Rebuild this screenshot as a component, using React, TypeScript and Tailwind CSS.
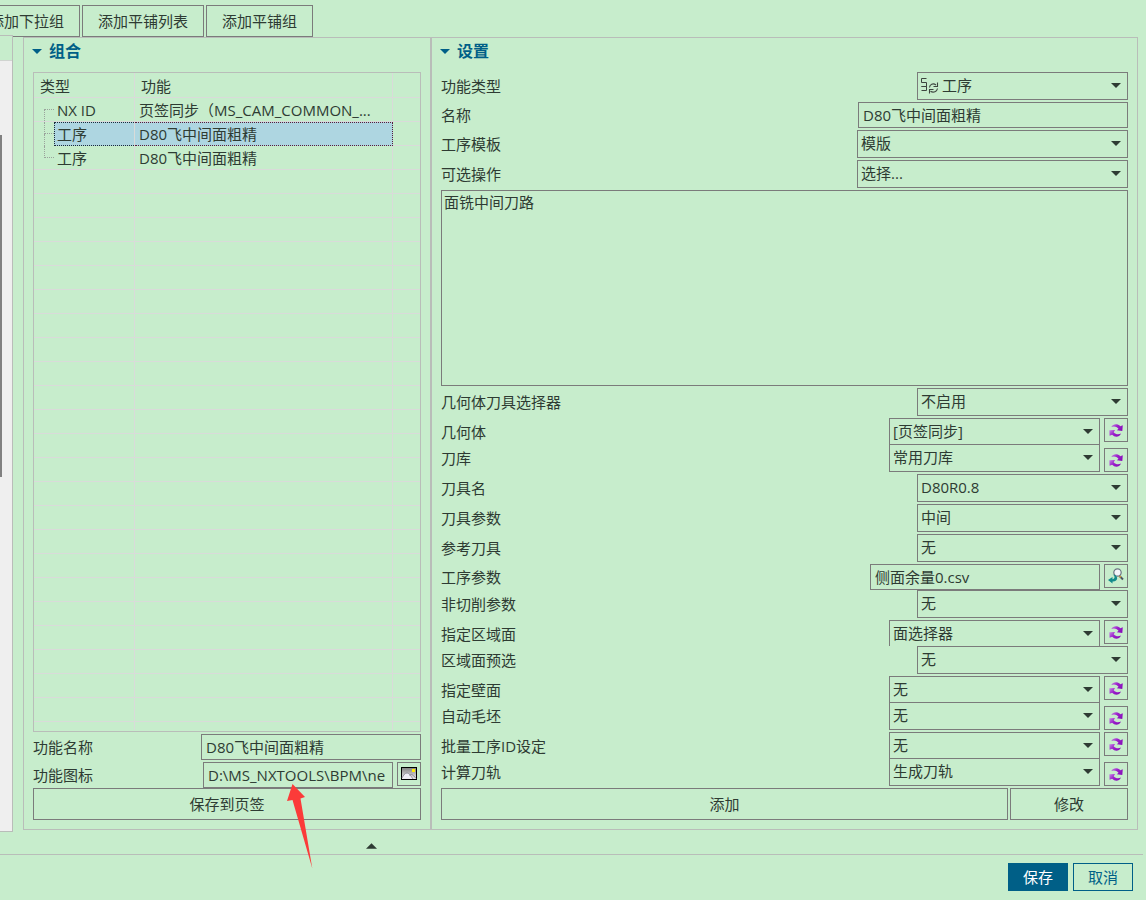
import React from "react";

const ctl = "border border-[#7b7b7b] bg-[#c7edcc] text-[#2e3b33]";

function Caret({ className = "" }: { className?: string }) {
  return (
    <svg viewBox="0 0 10 5" className={`h-[5px] w-[10px] shrink-0 ${className}`} fill="currentColor" aria-hidden="true">
      <path d="M0 0h10L5 5z" />
    </svg>
  );
}

function ProcessIcon() {
  return (
    <svg viewBox="0 0 18 18" className="pointer-events-none absolute top-[5px] left-[4px] h-[18px] w-[18px]" fill="none" stroke="#3d453f" aria-hidden="true">
      <path d="M5.500 1.500H.5V5.500H5.500V9.500H.5M.5 9.500H5.500V13.500H.5" />
      <path d="M8.500 10.500C8.700 7.500 12 5.700 15 8M16.500 5.500V9.500H12.500M16.500 11.500C16 14.500 12.500 16.300 9.500 14.300M8.500 16.500V12.500H12.500" strokeWidth="1.100" />
    </svg>
  );
}

function RefreshIcon() {
  return (
    <svg viewBox="0 0 14 13" className="h-[13px] w-[14px]" aria-hidden="true">
      <defs>
        <linearGradient id="violet" x1="0" y1="0" x2="1" y2="0.6">
          <stop offset="0" stopColor="#c78ae4" />
          <stop offset="0.5" stopColor="#9c22cc" />
          <stop offset="1" stopColor="#8a0fba" />
        </linearGradient>
      </defs>
      <path d="M2.300 3C4-.3 8.500-.8 11.300 2.200L13.800 1.300L13.300 7L7.800 6.300L9.500 4.700C7.500 2.300 4.800 2 2.300 3Z" fill="url(#violet)" />
      <path d="M12 9.500C10.300 13.300 5.800 13.600 3.200 10.800L.6 11.700L.3 6.300L6 6.100L4.700 8.200C6.800 10.500 9.500 10.700 12 9.500Z" fill="url(#violet)" />
    </svg>
  );
}

function BrowseIcon() {
  return (
    <svg viewBox="0 0 16 16" className="h-[16px] w-[16px]" aria-hidden="true">
      <path d="M11.500 8L15 11.500" stroke="#4a5563" strokeWidth="2" />
      <path d="M11 7.500L12.800 9.300" stroke="#e0a030" strokeWidth="1.500" />
      <circle cx="9.500" cy="4.500" r="3.700" fill="#f4f6fb" stroke="#6b7480" strokeWidth="1.200" />
      <path d="M4.500 6.500C7.500 8 7 11 4.500 11.200V9L0 12L4.500 15.500V13.500C10.500 13.800 11 7 4.500 6.500Z" fill="#128c8c" />
    </svg>
  );
}

function PictureIcon() {
  return (
    <svg viewBox="0 0 16 13" className="-mt-[2px] h-[13px] w-[16px]" aria-hidden="true">
      <defs>
        <linearGradient id="sky" x1="0" y1="0" x2="0" y2="1">
          <stop offset="0" stopColor="#808080" />
          <stop offset="1" stopColor="#f2f2f2" />
        </linearGradient>
      </defs>
      <rect x=".5" y=".5" width="15" height="12" fill="url(#sky)" stroke="#000" />
      <rect x="11" y="2" width="3" height="3" fill="#ffee00" />
      <path d="M1 11C2.500 8 4 6 6 6C8 6 10 9 12 12" fill="#eeeef5" stroke="#8a8a94" strokeWidth=".9" />
      <path d="M8.500 8.500C10 6.500 11.500 7 15 11.500" fill="none" stroke="#8a8a94" strokeWidth=".9" />
    </svg>
  );
}

function IconButton({ label, end = false, children }: { label: string; end?: boolean; children: React.ReactNode }) {
  return (
    <button type="button" aria-label={label} className={`ml-1 flex h-6 w-6 shrink-0 items-center justify-center ${end ? "self-end" : "self-start"} ${ctl}`}>
      {children}
    </button>
  );
}

type Field = {
  label: string;
  value: string;
  kind?: "select" | "input";
  width: string;
  tight?: boolean;
  action?: "refresh" | "browse";
  icon?: boolean;
};

const TOP: Field[] = [
  { label: "功能类型", value: "工序", width: "w-[211px]", icon: true },
  { label: "名称", value: "D80飞中间面粗精", width: "w-[270px]", kind: "input" },
  { label: "工序模板", value: "模版", width: "w-[271px]" },
  { label: "可选操作", value: "选择...", width: "w-[271px]" },
];

const BOTTOM: Field[] = [
  { label: "几何体刀具选择器", value: "不启用", width: "w-[211px]" },
  { label: "几何体", value: "[页签同步]", width: "w-[211px]", action: "refresh", tight: true },
  { label: "刀库", value: "常用刀库", width: "w-[211px]", action: "refresh" },
  { label: "刀具名", value: "D80R0.8", width: "w-[211px]" },
  { label: "刀具参数", value: "中间", width: "w-[211px]" },
  { label: "参考刀具", value: "无", width: "w-[211px]" },
  { label: "工序参数", value: "侧面余量0.csv", width: "w-[230px]", kind: "input", action: "browse", tight: true },
  { label: "非切削参数", value: "无", width: "w-[211px]" },
  { label: "指定区域面", value: "面选择器", width: "w-[211px]", action: "refresh", tight: true },
  { label: "区域面预选", value: "无", width: "w-[211px]" },
  { label: "指定壁面", value: "无", width: "w-[211px]", action: "refresh", tight: true },
  { label: "自动毛坯", value: "无", width: "w-[211px]", action: "refresh" },
  { label: "批量工序ID设定", value: "无", width: "w-[211px]", action: "refresh", tight: true },
  { label: "计算刀轨", value: "生成刀轨", width: "w-[211px]", action: "refresh" },
];

function FieldRow({ f }: { f: Field }) {
  const id = `field-${f.label}`;
  const input = f.kind === "input";
  return (
    <div className={f.tight ? "h-[26px] overflow-hidden" : "mb-[2px]"}>
      <div className={`flex items-center ${input ? "h-[26px]" : "h-[28px]"}`}>
        <label htmlFor={id} className="flex-1 whitespace-nowrap">{f.label}</label>
        {input ? (
          <input id={id} defaultValue={f.value} className={`h-[26px] px-1 pb-[2px] ${f.width} ${ctl}`} />
        ) : (
          <div className={`relative h-[28px] ${f.width}`}>
            <select id={id} defaultValue={f.value} className={`h-full w-full appearance-none pr-6 pb-[2px] ${f.icon ? "pl-6" : "pl-[3px]"} ${ctl}`}>
              <option>{f.value}</option>
            </select>
            {f.icon && <ProcessIcon />}
            <Caret className="pointer-events-none absolute top-[11px] right-[7px]" />
          </div>
        )}
        {f.action && (
          <IconButton label={f.action === "refresh" ? `刷新${f.label}` : `浏览${f.label}`} end={!f.tight}>
            {f.action === "refresh" ? <RefreshIcon /> : <BrowseIcon />}
          </IconButton>
        )}
      </div>
    </div>
  );
}

function PanelTitle({ children }: { children: React.ReactNode }) {
  return (
    <h2 className="flex h-[34px] items-start gap-[7px] pt-px text-[16px] leading-6 font-bold text-[#005f87]">
      <Caret className="mt-[10px] -ml-px" />
      {children}
    </h2>
  );
}

const ITEMS = [
  { type: "NX ID", name: "页签同步（MS_CAM_COMMON_...", selected: false },
  { type: "工序", name: "D80飞中间面粗精", selected: true },
  { type: "工序", name: "D80飞中间面粗精", selected: false },
];

function ItemTable() {
  const line = "border-[#d9dbd9]";
  return (
    <div className="flex-1 border border-[#b9bdb9]">
      <table className="w-full table-fixed border-separate border-spacing-0">
        <colgroup>
          <col className="w-[101px]" />
          <col />
          <col className="w-[27px]" />
        </colgroup>
        <thead>
          <tr className="h-[25px] text-left">
            <th className={`border-r border-b p-0 pt-px pl-[6px] font-normal ${line}`}>类型</th>
            <th className={`border-r border-b p-0 pt-px pl-[6px] font-normal ${line}`}>功能</th>
            <th className={`border-b p-0 ${line}`} />
          </tr>
        </thead>
        <tbody>
          {ITEMS.map((item, i) => (
            <tr key={i} className="h-[24px]">
              <td className={`border-r p-0 ${item.selected ? "" : "border-b"} ${line}`}>
                <div className="flex">
                  <div className="ml-[10px] flex w-[10px] flex-col">
                    <div className={`h-[12px] border-b border-dotted border-[#9aa39c] ${i > 0 ? "border-l" : ""}`} />
                    <div className={`flex-1 border-dotted border-[#9aa39c] ${i < 2 ? "border-l" : ""}`} />
                  </div>
                  <div className={`flex-1 ${item.selected ? "h-[24px] border-y border-l border-dotted border-[#1d2b3a] bg-[#aed6e1] pl-[2px] leading-[22px]" : "h-[23px] pl-[3px] leading-[24px]"}`}>
                    {item.type}
                  </div>
                </div>
              </td>
              <td className={`p-0 ${item.selected ? "" : "border-r border-b"} ${line}`}>
                <div className={`overflow-hidden pl-1 whitespace-nowrap ${item.selected ? "h-[24px] border-y border-r border-dotted border-[#5a1d3a] bg-[#aed6e1] leading-[22px]" : "h-[23px] leading-[24px]"}`}>
                  {item.name}
                </div>
              </td>
              <td className={`border-b p-0 ${line}`} />
            </tr>
          ))}
          {Array.from({ length: 23 }, (_, i) => (
            <tr key={`blank-${i}`} className="h-[24px]">
              <td className={`border-r border-b p-0 ${line}`} />
              <td className={`border-r border-b p-0 ${line}`} />
              <td className={`border-b p-0 ${line}`} />
            </tr>
          ))}
          <tr className="h-[8px]">
            <td className={`border-r p-0 ${line}`} />
            <td className={`border-r p-0 ${line}`} />
            <td className="p-0" />
          </tr>
        </tbody>
      </table>
    </div>
  );
}

export default function App() {
  return (
    <div className="flex min-h-screen flex-col overflow-hidden bg-[#c7edcc] font-['Open_Sans','Noto_Sans_CJK_SC',sans-serif] text-[15px] leading-5 text-[#2e3b33]">
      <div className="-ml-[27px] flex gap-[2px] pt-[5px]">
        {["添加下拉组", "添加平铺列表", "添加平铺组"].map((t) => (
          <button key={t} type="button" className={`h-[32px] px-[15px] whitespace-nowrap ${ctl}`}>{t}</button>
        ))}
      </div>

      <main className="relative flex pr-2">
        <aside className="relative -mt-[2px] -mb-[2px] flex w-[13px] shrink-0 flex-col border-t border-r border-[#b9bdb9] bg-[#c7edcc]">
          <div className="h-[25px] border-b border-[#d0d4d0]" />
          <div className="flex-1 border-b border-[#b9bdb9] bg-[#efefef] pt-[74px]">
            <div className="h-[342px] w-[2px] bg-[#808080]" />
          </div>
        </aside>

        <section className="ml-[10px] flex w-[407px] shrink-0 flex-col border-t border-b border-l border-[#b9bdb9] px-[9px] pb-[9px]">
          <PanelTitle>组合</PanelTitle>
          <ItemTable />
          <div className="mt-[2px] mb-[2px] flex items-center">
            <label htmlFor="func-name" className="flex-1">功能名称</label>
            <input id="func-name" defaultValue="D80飞中间面粗精" className={`h-[26px] w-[220px] px-1 pb-[2px] ${ctl}`} />
          </div>
          <div className="flex items-center">
            <label htmlFor="func-icon" className="flex-1">功能图标</label>
            <input id="func-icon" defaultValue="D:\MS_NXTOOLS\BPM\ne" className={`h-[26px] w-[190px] px-1 pb-px ${ctl}`} />
            <IconButton label="选择图标"><PictureIcon /></IconButton>
          </div>
          <button type="button" className={`h-[32px] ${ctl}`}>保存到页签</button>
        </section>

        <section className="flex min-w-0 flex-1 flex-col border-t border-r border-b border-l-2 border-[#b9bdb9] pr-[9px] pb-[9px] pl-[9px]">
          <PanelTitle>设置</PanelTitle>
          {TOP.map((f) => <FieldRow key={f.label} f={f} />)}
          <textarea aria-label="说明" defaultValue="面铣中间刀路" className={`mb-[2px] block h-[196px] w-full resize-none px-[2px] py-px ${ctl}`} />
          {BOTTOM.map((f) => <FieldRow key={f.label} f={f} />)}
          <div className="flex gap-[2px]">
            <button type="button" className={`h-[32px] flex-1 ${ctl}`}>添加</button>
            <button type="button" className={`h-[32px] w-[118px] ${ctl}`}>修改</button>
          </div>
        </section>

        <svg viewBox="0 0 26 86" className="pointer-events-none absolute -bottom-[39px] left-[287px] h-[86px] w-[26px]" aria-hidden="true">
          <path d="M5.500 1L18 14L13.500 15.500L25.300 85.500L5.500 17L0 18Z" fill="#fb3b39" />
        </svg>
      </main>

      <footer className="flex flex-1 flex-col">
        <div className="mr-[3px] h-[25px] border-b border-[#b9bdb9] pt-[13px] pl-[366px]">
          <Caret className="h-[6px] w-[11px] rotate-180" />
        </div>
        <div className="flex justify-end gap-[5px] pt-2 pr-[13px] pb-2">
          <button type="button" className="h-[28px] w-[60px] border border-[#005f87] bg-[#005f87] text-white">保存</button>
          <button type="button" className="h-[28px] w-[60px] border border-[#005f87] text-[#005f87]">取消</button>
        </div>
      </footer>
    </div>
  );
}
